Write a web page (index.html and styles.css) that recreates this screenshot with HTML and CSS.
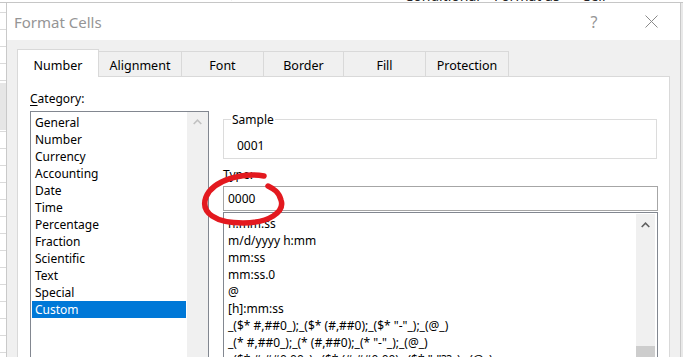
FILE: index.html
```html
<!DOCTYPE html>
<html>
<head>
<meta charset="utf-8">
<link rel="stylesheet" href="styles.css">
</head>
<body>
<div class="excel">
  <div class="ribbon">
    <span class="rb r1">Ce</span>
    <span class="rb r2">&#8595; 0 .00</span>
    <span class="rb r3">Conditional</span>
    <span class="rb r4">Format as</span>
    <span class="rb r5">Cell</span>
  </div>
  <div class="sheet"></div>
</div>

<div class="dialog">
  <div class="titlebar">
    <span class="title">Format Cells</span>
    <span class="tbtn help">?</span>
    <span class="tbtn close">
      <svg width="13" height="13" viewBox="0 0 13 13"><path d="M0.5 0.5 L12.5 12.5 M12.5 0.5 L0.5 12.5" stroke="#8a8a8a" stroke-width="1" fill="none"/></svg>
    </span>
  </div>
  <div class="dbody">
    <div class="tabs">
      <div class="tab active w82">Number</div>
      <div class="tab w82">Alignment</div>
      <div class="tab w82">Font</div>
      <div class="tab w80">Border</div>
      <div class="tab w82">Fill</div>
      <div class="tab w84 last">Protection</div>
    </div>
    <div class="panel">
      <div class="col-left">
        <div class="label"><u>C</u>ategory:</div>
        <div class="listbox cat">
          <ul class="items">
            <li>General</li>
            <li>Number</li>
            <li>Currency</li>
            <li>Accounting</li>
            <li>Date</li>
            <li>Time</li>
            <li>Percentage</li>
            <li>Fraction</li>
            <li>Scientific</li>
            <li>Text</li>
            <li>Special</li>
            <li class="sel">Custom</li>
          </ul>
          <div class="scrollbar">
            <div class="sb-btn cat-btn">
              <svg width="9" height="6" viewBox="0 0 9 6"><path d="M0.7 5 L4.5 1.2 L8.3 5" stroke="#c2c2c2" stroke-width="1.6" fill="none"/></svg>
            </div>
          </div>
        </div>
      </div>
      <div class="col-right">
        <fieldset class="sample">
          <legend>Sample</legend>
          <div class="sample-val">0001</div>
        </fieldset>
        <div class="label type-label">Type:</div>
        <div class="input">0000</div>
        <div class="listbox types">
          <div class="viewport">
            <ul class="items titems">
              <li>h:mm:ss</li>
              <li>m/d/yyyy h:mm</li>
              <li>mm:ss</li>
              <li>mm:ss.0</li>
              <li>@</li>
              <li>[h]:mm:ss</li>
              <li>_($* #,##0_);_($* (#,##0);_($* "-"_);_(@_)</li>
              <li>_(* #,##0_);_(* (#,##0);_(* "-"_);_(@_)</li>
              <li>_($* #,##0.00_);_($* (#,##0.00);_($* "-"??_);_(@_)</li>
              <li>_(* #,##0.00_);_(* (#,##0.00);_(* "-"??_);_(@_)</li>
            </ul>
          </div>
          <div class="scrollbar tsb">
            <div class="sb-btn type-btn">
              <svg width="9" height="6" viewBox="0 0 9 6"><path d="M0.7 5 L4.5 1.2 L8.3 5" stroke="#606060" stroke-width="1.6" fill="none"/></svg>
            </div>
            <div class="thumb"></div>
          </div>
        </div>
      </div>
    </div>
  </div>
</div>

<svg class="annot" width="683" height="357" viewBox="0 0 683 357">
  <path d="M264 176 C243 172 213 180 206 197 C200 213 216 223 243 223 C269 223 285 212 281 200 C279 192 274 189 268 186" stroke="#e3191f" stroke-width="5.5" fill="none" stroke-linecap="round"/>
</svg>
</body>
</html>
```

FILE: styles.css
```css
* { box-sizing: border-box; }
html, body { margin: 0; padding: 0; }
body {
  width: 683px;
  height: 357px;
  overflow: hidden;
  position: relative;
  background: #fff;
  font-family: "Segoe UI", "Noto Sans", "Liberation Sans", sans-serif;
  font-size: 12px;
  color: #000;
}

/* Excel behind the dialog */
.excel { height: 357px; display: flex; flex-direction: column; }
.ribbon {
  height: 3px;
  display: flex;
  overflow: hidden;
  border-bottom: 1px solid #c6c6c6;
  color: #222;
  font-size: 12px;
}
.rb { line-height: 12px; margin-top: -10px; white-space: nowrap; }
.r1 { margin-left: 0; }
.r2 { margin-left: 214px; }
.r3 { margin-left: 140px; font-size: 14px; }
.r4 { margin-left: 14px; font-size: 14px; }
.r5 { margin-left: 22px; font-size: 14px; }
.sheet {
  flex: 1;
  background:
    linear-gradient(#e6e6e6, #e6e6e6) 0 80px / 7px 47px no-repeat,
    linear-gradient(#e9e9e9, #e9e9e9) 680px 0 / 3px 100% no-repeat,
    repeating-linear-gradient(to bottom, #fff 0 16px, #dadada 16px 17px) 0 -7px / 100% 17px repeat;
}

/* Dialog */
.dialog {
  position: absolute;
  left: 6px;
  top: 3px;
  width: 675px;
  height: 354px;
  border-left: 1px solid #c9c9c9;
  border-right: 1px solid #c9c9c9;
  background: #f0f0f0;
  display: flex;
  flex-direction: column;
}
.titlebar {
  height: 37px;
  flex: none;
  background: #fff;
  display: flex;
  align-items: center;
  padding: 0 6px 0 7px;
}
.title {
  flex: 1;
  font-size: 15px;
  color: #959595;
}
.tbtn {
  width: 46px;
  height: 37px;
  display: flex;
  align-items: center;
  justify-content: center;
}
.help { font-size: 16px; color: #959595; margin-right: 11px; }
.close svg { display: block; }

.dbody {
  flex: 1;
  display: flex;
  flex-direction: column;
  padding: 9px 10px 0 10px;
  min-height: 0;
}
.tabs {
  height: 27px;
  display: flex;
  align-items: flex-end;
  flex: none;
}
.tab {
  height: 25px;
  border-top: 1px solid #d9d9d9;
  border-left: 1px solid #d9d9d9;
  background: #f0f0f0;
  display: flex;
  align-items: center;
  justify-content: center;
  padding-top: 3px;
  line-height: 17px;
  font-size: 12.5px;
}
.tab.last { border-right: 1px solid #d9d9d9; }
.tab.active {
  height: 28px;
  margin-bottom: -1px;
  background: #fff;
  border-right: 1px solid #d9d9d9;
  padding-top: 4px;
  position: relative;
  z-index: 1;
}
.w80 { width: 80px; }
.w82 { width: 82px; }
.w84 { width: 84px; }
.tab.active + .tab { border-left: none; }

.panel {
  flex: 1;
  min-height: 0;
  background: #fff;
  border: 1px solid #d9d9d9;
  border-bottom: none;
  display: grid;
  grid-template-columns: 179px 435px;
  column-gap: 14px;
  padding: 13px 11px 0 12px;
  overflow: hidden;
  align-items: start;
}
.label { line-height: 17px; }
.label u { text-decoration-thickness: 1px; text-underline-offset: 2px; }

.listbox {
  border: 1px solid #828790;
  background: #fff;
  display: flex;
}
.cat {
  margin-top: 4px;
  height: 260px;
}
.items {
  list-style: none;
  margin: 0;
  padding: 2px 0 0 0;
  flex: 1;
  min-width: 0;
}
.items li {
  line-height: 17px;
  height: 17px;
  margin: 0 1px;
  padding-left: 3px;
  white-space: nowrap;
}
.items li.sel { background: #0078d7; color: #fff; }
.scrollbar {
  width: 21px;
  flex: none;
  background: #f0f0f0;
  display: flex;
  flex-direction: column;
}
.sb-btn {
  flex: none;
  display: flex;
  align-items: center;
  justify-content: center;
}
.sb-btn svg { display: block; }
.cat-btn { height: 20px; }

.sample {
  margin: 22px 1px 0 0;
  padding: 0 0 4px 7px;
  border: 1px solid #dcdcdc;
  min-width: 0;
}
.sample legend {
  padding: 0 1px;
  line-height: 15px;
}
.sample-val {
  margin: 10px 0 0 6px;
  line-height: 17px;
}
.type-label { margin-top: 7px; }
.input {
  margin-top: 3px;
  height: 25px;
  border: 1px solid #a6a6a6;
  padding-left: 4px;
  line-height: 23px;
}
.types {
  margin-top: 1px;
  height: 170px;
  padding: 1px 2px 0 0;
}
.viewport {
  flex: 1;
  min-width: 0;
  margin-top: 6px;
  overflow: hidden;
}
.titems { margin-top: -5px; padding: 0; }
.titems li { margin: 0; padding-left: 4px; }
.tsb { width: 19px; }
.type-btn { height: 22px; }
.thumb {
  flex: none;
  margin-top: 110px;
  height: 40px;
  background: #cdcdcd;
}

.annot {
  position: absolute;
  left: 0;
  top: 0;
  pointer-events: none;
}
```
